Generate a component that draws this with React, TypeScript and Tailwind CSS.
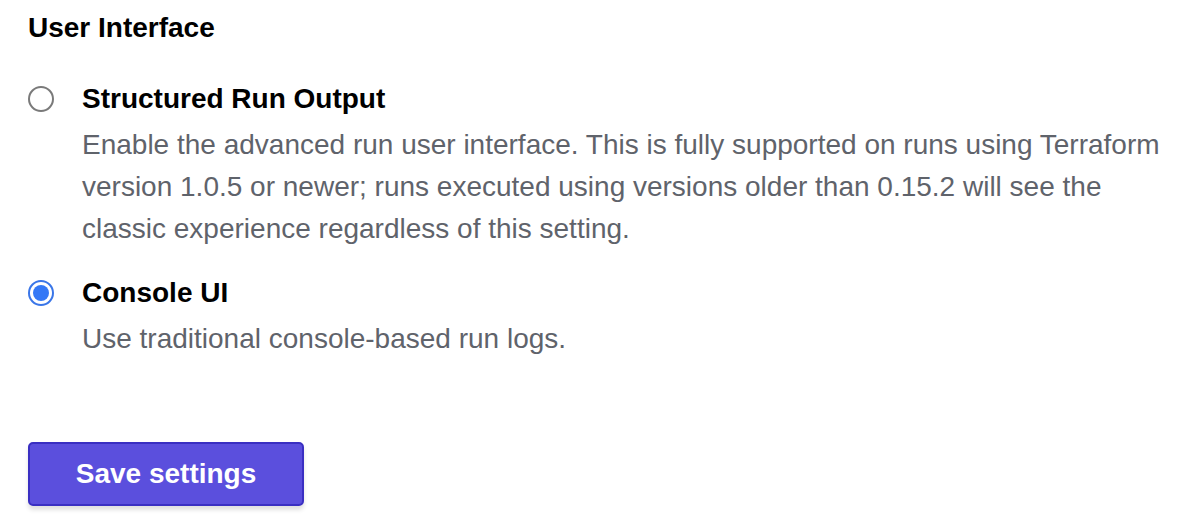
import { useState } from "react"

interface RunOption {

    id: string
    title: string
    description: string

}

const options: RunOption[] = [
    {
        id: "structured",
        title: "Structured Run Output",
        description: "Enable the advanced run user interface. This is fully supported on runs using Terraform version 1.0.5 or newer; runs executed using versions older than 0.15.2 will see the classic experience regardless of this setting.",
    },
    {
        id: "console",
        title: "Console UI",
        description: "Use traditional console-based run logs.",
    },
]

const Radio: React.FC<{ checked: boolean }> = ({ checked }) => {

    if (checked) {
        return (
            <span className="flex h-[26px] w-[26px] items-center justify-center rounded-full border-[2px] border-[#3a76e8] bg-white">
                <span className="h-[16px] w-[16px] rounded-full bg-[#3478f6]" />
            </span>
        )
    }

    return <span className="block h-[26px] w-[26px] rounded-full border-[2px] border-[#7a7a7a] bg-white" />

}

export default function App() {

    const [selected, setSelected] = useState("console")

    return (

        <div className="min-h-[526px] bg-white pl-[28px] pt-[10px] text-black" style={{ fontFamily: '"Liberation Sans", Arial, sans-serif' }}>

            <h3 className="text-[28px] font-bold leading-[36px]">User Interface</h3>

            <div className="mt-[32px] flex flex-col gap-[22px]">

                {
                    options.map((opt) => (

                        <label key={opt.id} className="flex cursor-pointer items-start" onClick={() => setSelected(opt.id)}>

                            <span className="flex h-[42px] w-[54px] shrink-0 items-center">
                                <Radio checked={selected === opt.id} />
                            </span>

                            <span className="flex flex-col pr-[28px]">
                                <span className="text-[28px] font-bold leading-[42px]">{opt.title}</span>
                                <span className="mt-[4px] text-[28px] leading-[42px] text-[#5f636b]">{opt.description}</span>
                            </span>

                        </label>

                    ))
                }

            </div>

            <button className="mt-[82px] h-[64px] w-[276px] rounded-[5px] border-[2px] border-[#3a2fc2] bg-[#5b4fdd] text-[28px] font-bold text-white shadow-[0_4px_4px_rgba(0,0,0,0.12)]">
                Save settings
            </button>

        </div>

    )

}
